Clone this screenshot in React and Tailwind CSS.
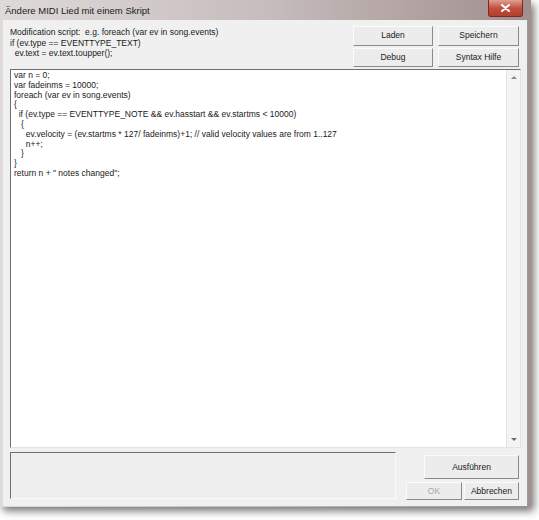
import React from 'react';

const font = { fontFamily: '"Liberation Sans", Arial, sans-serif' };

const code = [
  'var n = 0;',
  'var fadeinms = 10000;',
  'foreach (var ev in song.events)',
  '{',
  '  if (ev.type == EVENTTYPE_NOTE && ev.hasstart && ev.startms < 10000)',
  '   {',
  '     ev.velocity = (ev.startms * 127/ fadeinms)+1; // valid velocity values are from 1..127',
  '     n++;',
  '   }',
  '}',
  'return n + " notes changed";',
];

function Btn({ children, className = '', disabled }) {
  return (
    <div
      className={
        'flex items-center justify-center bg-[#ececec] border border-t-[#fbfbfb] border-l-[#fbfbfb] border-r-[#8a8a8a] border-b-[#8a8a8a] text-[8.5px] ' +
        (disabled ? 'text-[#a8a8a8] ' : 'text-[#1a1a1a] ') +
        className
      }
    >
      {children}
    </div>
  );
}

export default function App() {
  return (
    <div className="w-[539px] h-[520px] bg-white relative" style={font}>
      <div className="w-[531px] h-[507px] flex flex-col shadow-[3px_4px_8px_rgba(0,0,0,0.55)] bg-gradient-to-r from-[#dedad9] via-[#c6bdbc] to-[#a18f8e]">
        {/* title bar */}
        <div className="h-[20px] flex items-start justify-between relative">
          <span className="text-[9.5px] text-[#1c1c1c] pl-[5px] pt-[4px]">Ändere MIDI Lied mit einem Skript</span>
          <div className="mr-[8px] w-[35px] h-[17px] rounded-b-[3px] border border-t-0 border-[#7a2a20] bg-gradient-to-b from-[#e0a092] via-[#c25040] to-[#b0402c] flex items-center justify-center">
            <svg width="9" height="8" viewBox="0 0 9 8">
              <path d="M1 1 L8 7 M8 1 L1 7" stroke="white" strokeWidth="2" strokeLinecap="round" />
            </svg>
          </div>
        </div>
        {/* client */}
        <div className="flex-1 ml-[3px] mr-[3px] mb-[1px] bg-[#f0f0f0] border-r border-[#9a9a9a] flex flex-col pl-[7px] pr-[6px]">
          <div className="flex justify-between pt-[6px] h-[49px]">
            <div className="text-[8.5px] leading-[10.5px] text-[#1a1a1a] pt-[1px] whitespace-pre">
              {'Modification script:  e.g. foreach (var ev in song.events)\nif (ev.type == EVENTTYPE_TEXT)\n  ev.text = ev.text.toupper();'}
            </div>
            <div className="grid grid-cols-[80px_81px] gap-x-[5px] gap-y-[2px] mr-[2px] h-[41px]">
              <Btn>Laden</Btn>
              <Btn>Speichern</Btn>
              <Btn>Debug</Btn>
              <Btn>Syntax Hilfe</Btn>
            </div>
          </div>
          <div className="h-[379px] flex bg-white border border-t-[#6f6f6f] border-l-[#6f6f6f] border-r-[#e3e3e3] border-b-[#e3e3e3]">
            <div className="flex-1 pl-[3px] pt-[1px] text-[8.5px] leading-[9.8px] text-[#1a1a1a] whitespace-pre">
              {code.join('\n')}
            </div>
            <div className="w-[14px] bg-[#f4f4f4] border-l border-[#e4e4e4] flex flex-col justify-between items-center py-[5px]">
              <svg width="6" height="4" viewBox="0 0 6 4"><path d="M0 4 L3 1 L6 4 Z" fill="#8a8a8a" /></svg>
              <svg width="6" height="4" viewBox="0 0 6 4"><path d="M0 0 L3 3 L6 0 Z" fill="#6a6a6a" /></svg>
            </div>
          </div>
          <div className="flex justify-between mt-[4px]">
            <div className="w-[386px] h-[47px] bg-[#eeeeee] border border-t-[#6f6f6f] border-l-[#6f6f6f] border-r-[#fafafa] border-b-[#fafafa]" />
            <div className="flex flex-col items-end pt-[3px] mr-[2px] gap-[3px]">
              <Btn className="w-[95px] h-[24px]">Ausführen</Btn>
              <div className="flex gap-[2px]">
                <Btn className="w-[56px] h-[18px]" disabled>OK</Btn>
                <Btn className="w-[55px] h-[18px]">Abbrechen</Btn>
              </div>
            </div>
          </div>
        </div>
      </div>
    </div>
  );
}
